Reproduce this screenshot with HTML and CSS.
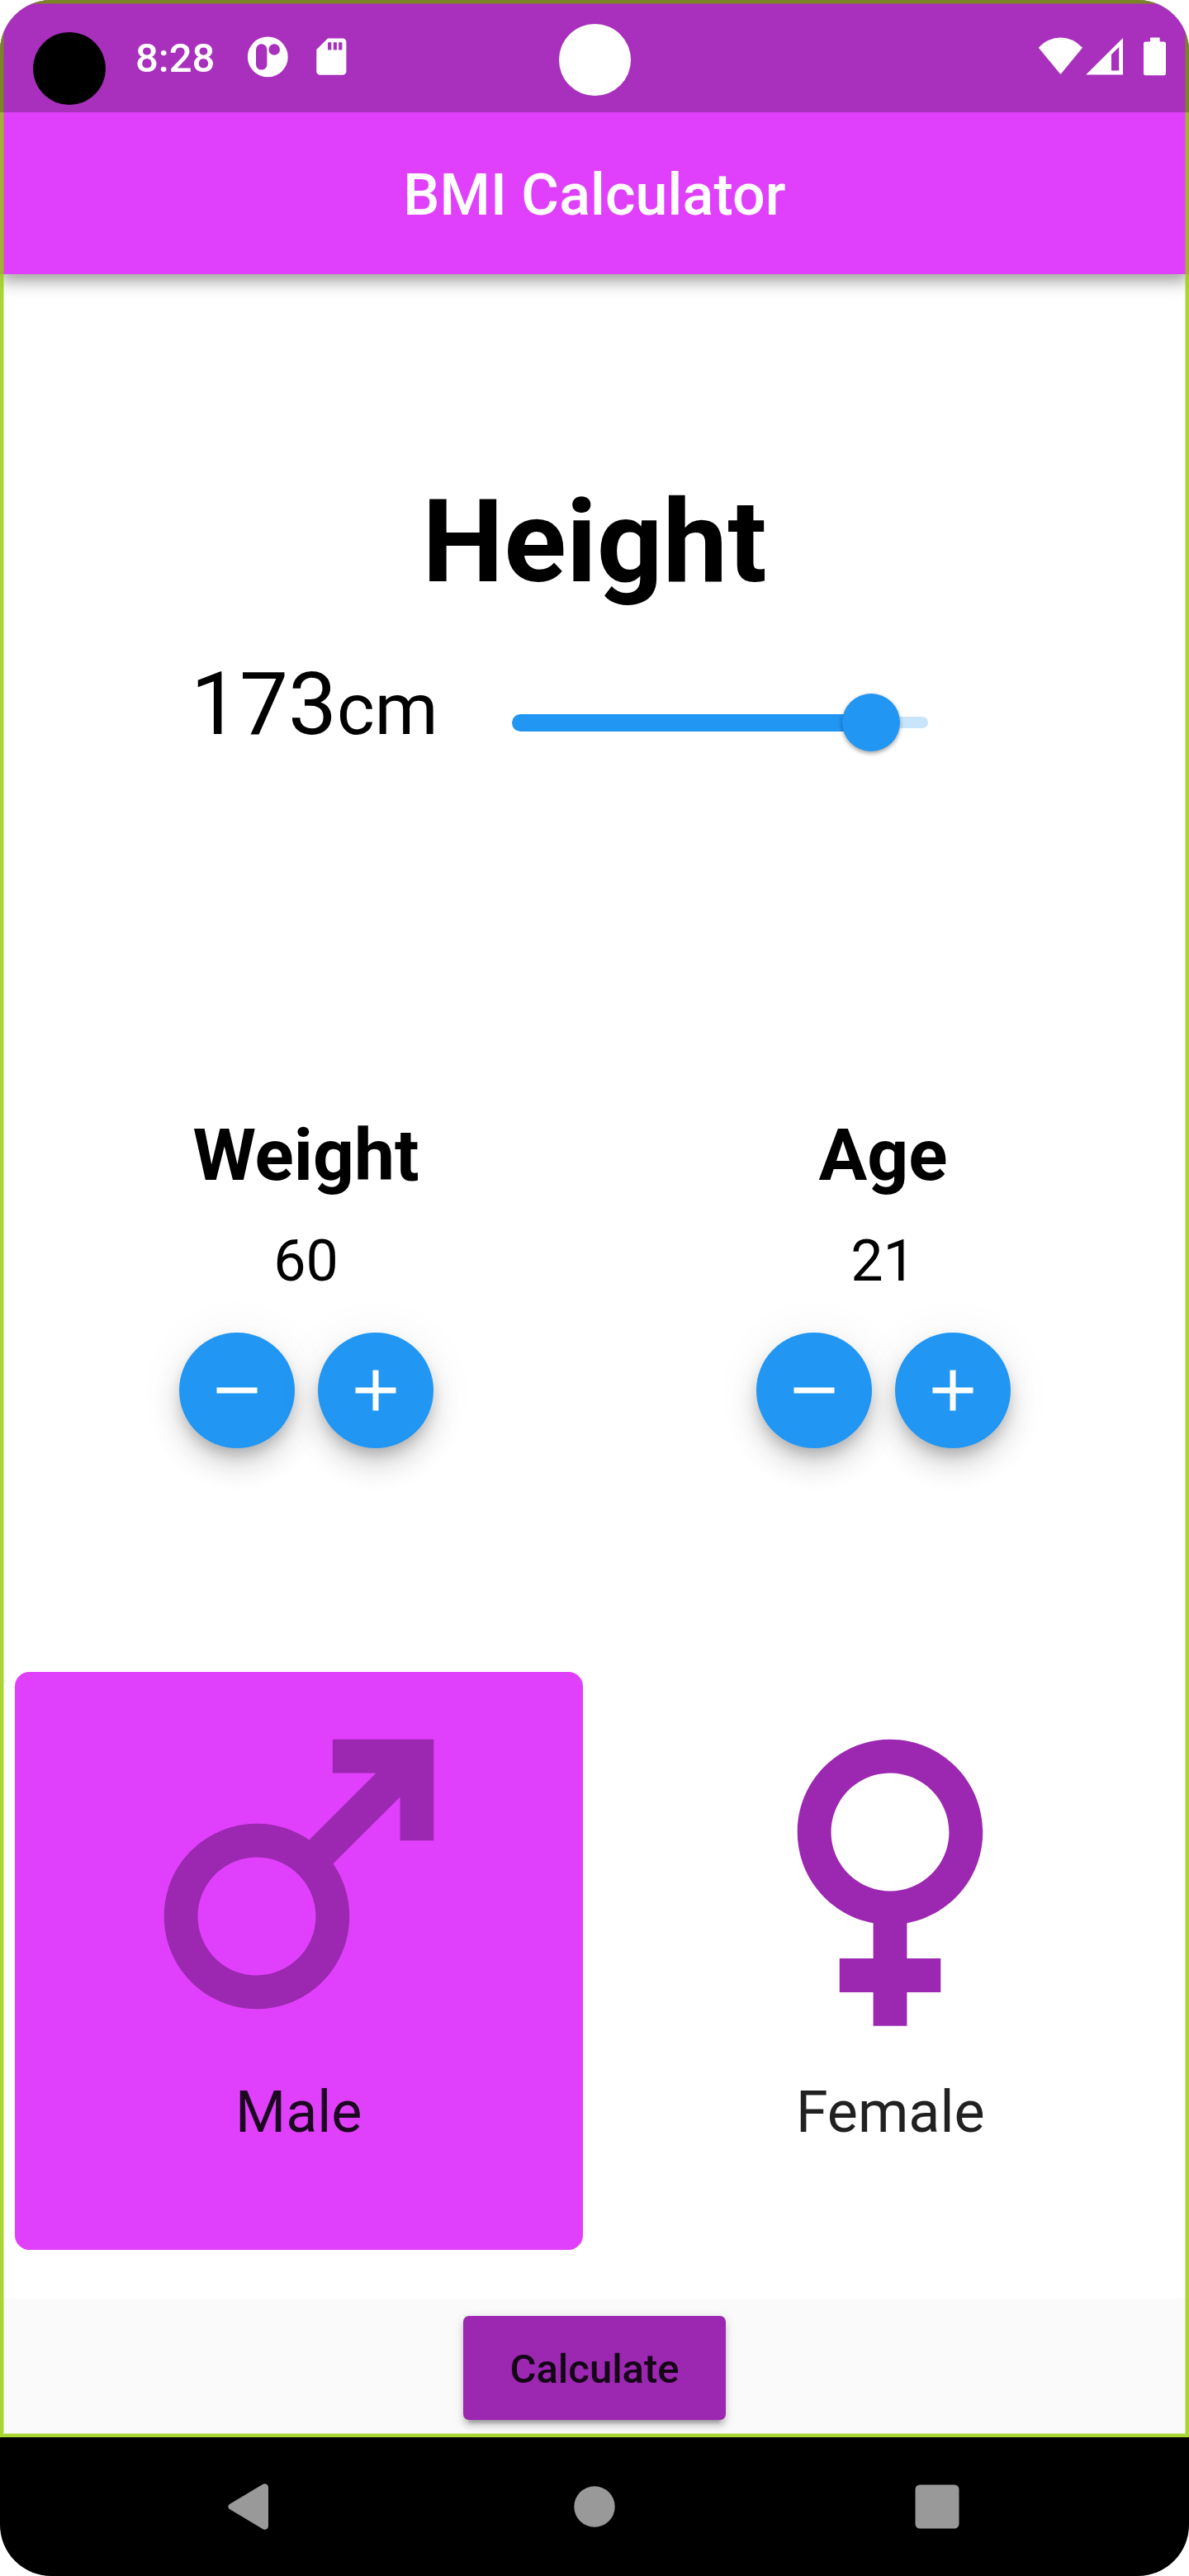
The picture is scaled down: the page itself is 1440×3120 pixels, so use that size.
FILE: index.html
```html
<!DOCTYPE html>
<html lang="en">
<head>
<meta charset="utf-8">
<title>BMI Calculator</title>
<link rel="stylesheet" href="styles.css">
</head>
<body>
<div class="phone">
  <div class="app">
    <header class="top">
      <div class="statusbar">
        <span class="punch"></span>
        <span class="clock">8:28</span>
        <svg class="st-icons-left" width="120" height="50" viewBox="300 43.500 120 50" fill="#fff">
          <path fill-rule="evenodd" d="M324.300 44a24.400 24.400 0 1 1 0 48.800a24.400 24.400 0 1 1 0-48.800zM316.700 52.700a6.700 6.700 0 0 0-6.700 6.700v18a6.700 6.700 0 0 0 13.400 0v-18a6.700 6.700 0 0 0-6.700-6.700zM332.200 52.700a6.800 6.800 0 1 0 0 13.600a6.800 6.800 0 1 0 0-13.600z"/>
          <path fill-rule="evenodd" d="M397 46h18a4.400 4.400 0 0 1 4.400 4.400v35.500a4.400 4.400 0 0 1-4.400 4.400h-27.300a4.400 4.400 0 0 1-4.400-4.400v-26.500zM397 50.700v9.300h4.300v-9.300zM403.800 50.700v9.300h4.100v-9.300zM410.100 50.700v9.300h4.300v-9.300z"/>
        </svg>
        <span class="camera"></span>
        <svg class="st-icons-right" width="156" height="50" viewBox="1257 43.500 156 50" fill="#fff">
          <path d="M1257.800 57.300Q1269.500 45 1284.400 45T1311 57.300L1284.400 89.500z"/>
          <path fill-rule="evenodd" d="M1360 45.500V90h-44.800zM1355.200 56.500l-9.200 9V85h9.200z"/>
          <path d="M1393 45h11.600v5h4.900a2.500 2.500 0 0 1 2.500 2.500v35.700a2.500 2.500 0 0 1-2.500 2.500h-22a2.500 2.500 0 0 1-2.500-2.500V52.500a2.500 2.500 0 0 1 2.500-2.500h5.500z"/>
        </svg>
      </div>
      <h1 class="title">BMI Calculator</h1>
    </header>

    <main class="content">
      <section class="height">
        <h2 class="height-title">Height</h2>
        <div class="height-row">
          <div class="reading"><span class="num">173</span><span class="unit">cm</span></div>
          <div class="slider">
            <span class="active"></span>
            <span class="thumb"></span>
            <span class="rest"></span>
          </div>
        </div>
      </section>

      <section class="counters">
        <div class="counter">
          <h3 class="counter-title">Weight</h3>
          <p class="value">60</p>
          <div class="buttons">
            <button class="fab"><svg width="84" height="84" viewBox="0 0 24 24" fill="#fff"><path d="M19 13H5v-2h14v2z"/></svg></button>
            <button class="fab"><svg width="84" height="84" viewBox="0 0 24 24" fill="#fff"><path d="M19 13h-6v6h-2v-6H5v-2h6V5h2v6h6v2z"/></svg></button>
          </div>
        </div>
        <div class="counter">
          <h3 class="counter-title">Age</h3>
          <p class="value">21</p>
          <div class="buttons">
            <button class="fab"><svg width="84" height="84" viewBox="0 0 24 24" fill="#fff"><path d="M19 13H5v-2h14v2z"/></svg></button>
            <button class="fab"><svg width="84" height="84" viewBox="0 0 24 24" fill="#fff"><path d="M19 13h-6v6h-2v-6H5v-2h6V5h2v6h6v2z"/></svg></button>
          </div>
        </div>
      </section>

      <section class="genders">
        <div class="gender selected">
          <svg width="490" height="490" viewBox="0 0 24 24" fill="#9c27b0"><path d="M9.500 11c1.930 0 3.500 1.570 3.500 3.500S11.430 18 9.500 18 6 16.430 6 14.500 7.570 11 9.500 11zm0-2C6.460 9 4 11.460 4 14.500S6.460 20 9.500 20s5.500-2.460 5.500-5.500c0-1.160-.36-2.230-.97-3.120L18 7.420V10h2V4h-6v2h2.580l-3.970 3.970C11.730 9.360 10.660 9 9.500 9z"/></svg>
          <span class="gender-name">Male</span>
        </div>
        <div class="gender">
          <svg width="490" height="490" viewBox="0 0 24 24" fill="#9c27b0"><path d="M17.500 9.500C17.500 6.460 15.040 4 12 4S6.500 6.460 6.500 9.500c0 2.700 1.940 4.930 4.500 5.400V17H9v2h2v2h2v-2h2v-2h-2v-2.100c2.560-.47 4.500-2.700 4.500-5.400zm-9 0C8.500 7.570 10.070 6 12 6s3.500 1.570 3.500 3.500S13.930 13 12 13s-3.500-1.570-3.500-3.500z"/></svg>
          <span class="gender-name">Female</span>
        </div>
      </section>
    </main>

    <footer class="footer"><button class="calculate">Calculate</button></footer>
  </div>

  <nav class="navbar">
    <svg width="886" height="58" viewBox="276 3007 886 58" fill="#999">
      <path d="M318.500 3008.800L278 3032.900a3.700 3.700 0 0 0 0 6.200L318.500 3063.200a4.300 4.300 0 0 0 6.500-3.700V3012.500a4.300 4.300 0 0 0-6.500-3.700z"/>
      <circle cx="720" cy="3036" r="24.700"/>
      <rect x="1108.500" y="3009.500" width="53" height="53" rx="5.500"/>
    </svg>
  </nav>
</div>
</body>
</html>
```

FILE: styles.css
```css
* { box-sizing: border-box; }
body { margin: 0; background: #fff; font-family: Roboto, "Liberation Sans", sans-serif; color: #000; }
h1, h2, h3, p { margin: 0; }
button { border: 0; padding: 0; font-family: inherit; }
svg { display: block; flex: none; }

.phone { width: 1440px; height: 3120px; border-radius: 62px; overflow: hidden; background: #000; }
.app { position: relative; height: 2952px; display: flex; flex-direction: column; background: #fff; }

/* green frame drawn over the app window */
.app::after {
  content: ""; position: absolute; inset: 0; z-index: 2; pointer-events: none;
  border: 4px solid rgba(148, 204, 0, .8);
  box-shadow: inset 0 0 0 1px rgba(148, 204, 0, .4);
}

.top { height: 332px; flex: none; background: #e040fb; display: flex; flex-direction: column;
  box-shadow: 0 7px 14px -3.500px rgba(0, 0, 0, .2), 0 14px 17.500px rgba(0, 0, 0, .14), 0 3.500px 24px rgba(0, 0, 0, .12); }
.statusbar { position: relative; z-index: 3; height: 136px; flex: none; display: flex; align-items: flex-start;
  background: rgba(0, 0, 0, .25); padding-left: 40px; color: #fff; }
.punch { width: 88px; height: 88px; border-radius: 50%; background: #000; margin-top: 39px; }
.clock { font-size: 49px; font-weight: 500; line-height: 57px; margin: 42px 0 0 36px; width: 136px; }
.st-icons-left { margin-top: 43.500px; }
.camera { width: 87px; height: 87px; border-radius: 50%; background: #fff; margin: 29px 0 0 257px; }
.st-icons-right { margin: 43.500px 0 0 493px; }
.title { height: 196px; padding-top: 2px; line-height: 196px; text-align: center; color: #fff; font-size: 70px; font-weight: 500; letter-spacing: .1px; }

.content { height: 2452px; flex: none; display: flex; flex-direction: column; }
.height { height: 1016px; padding-top: 242px; }
.height-title { text-align: center; font-size: 140px; font-weight: 700; line-height: 164px; }
.height-row { display: flex; margin-top: 53px; padding-left: 231px; }
.reading { display: flex; align-items: baseline; width: 389px; padding-top: 1px; }
.num { font-size: 105px; line-height: 123px; }
.unit { font-size: 87.500px; line-height: 103px; }
.slider { display: flex; align-items: center; width: 504px; height: 168px; }
.active { width: 435px; height: 21px; border-radius: 10.500px 0 0 10.500px; background: #2196f3; }
.thumb { width: 70px; height: 70px; margin-left: -35px; border-radius: 50%; background: #2196f3; z-index: 1;
  box-shadow: 0 3px 5px rgba(0, 0, 0, .25), 0 1px 5px rgba(0, 0, 0, .15); }
.rest { flex: 1; height: 14px; border-radius: 0 7px 7px 0; background: #c8e5fc; }

.counters { height: 677px; display: flex; padding: 0 21px; }
.counter { flex: 1; display: flex; flex-direction: column; align-items: center; }
.counter-title { font-size: 87.500px; font-weight: 700; line-height: 103px; }
.value { font-size: 70px; line-height: 82px; margin-top: 35px; }
.buttons { display: flex; gap: 28px; margin-top: 46px; }
.fab { width: 140px; height: 140px; border-radius: 50%; background: #2196f3; display: flex; align-items: center; justify-content: center;
  box-shadow: 0 10.500px 17.500px -3.500px rgba(0, 0, 0, .2), 0 21px 35px rgba(0, 0, 0, .14), 0 3.500px 63px rgba(0, 0, 0, .06); }

.genders { display: flex; gap: 28px; padding: 0 17.500px; }
.gender { flex: 1; height: 700px; border-radius: 17.500px; display: flex; flex-direction: column; align-items: center; }
.selected { background: #e040fb; }
.gender-name { font-size: 70px; line-height: 82px; color: rgba(0, 0, 0, .87); margin-top: 2px; }

.footer { height: 168px; flex: none; background: #fafafa; display: flex; justify-content: center; padding-top: 21px; }
.calculate { width: 318.500px; height: 126px; border-radius: 7px; background: #9c27b0; color: rgba(0, 0, 0, .87);
  font-size: 49px; font-weight: 500; line-height: 57px; padding-top: 2px;
  box-shadow: 0 10.500px 3.500px -7px rgba(0, 0, 0, .2), 0 7px 7px rgba(0, 0, 0, .14), 0 3.500px 14px rgba(0, 0, 0, .12); }

.navbar { height: 168px; padding: 55px 0 0 276px; }
```
